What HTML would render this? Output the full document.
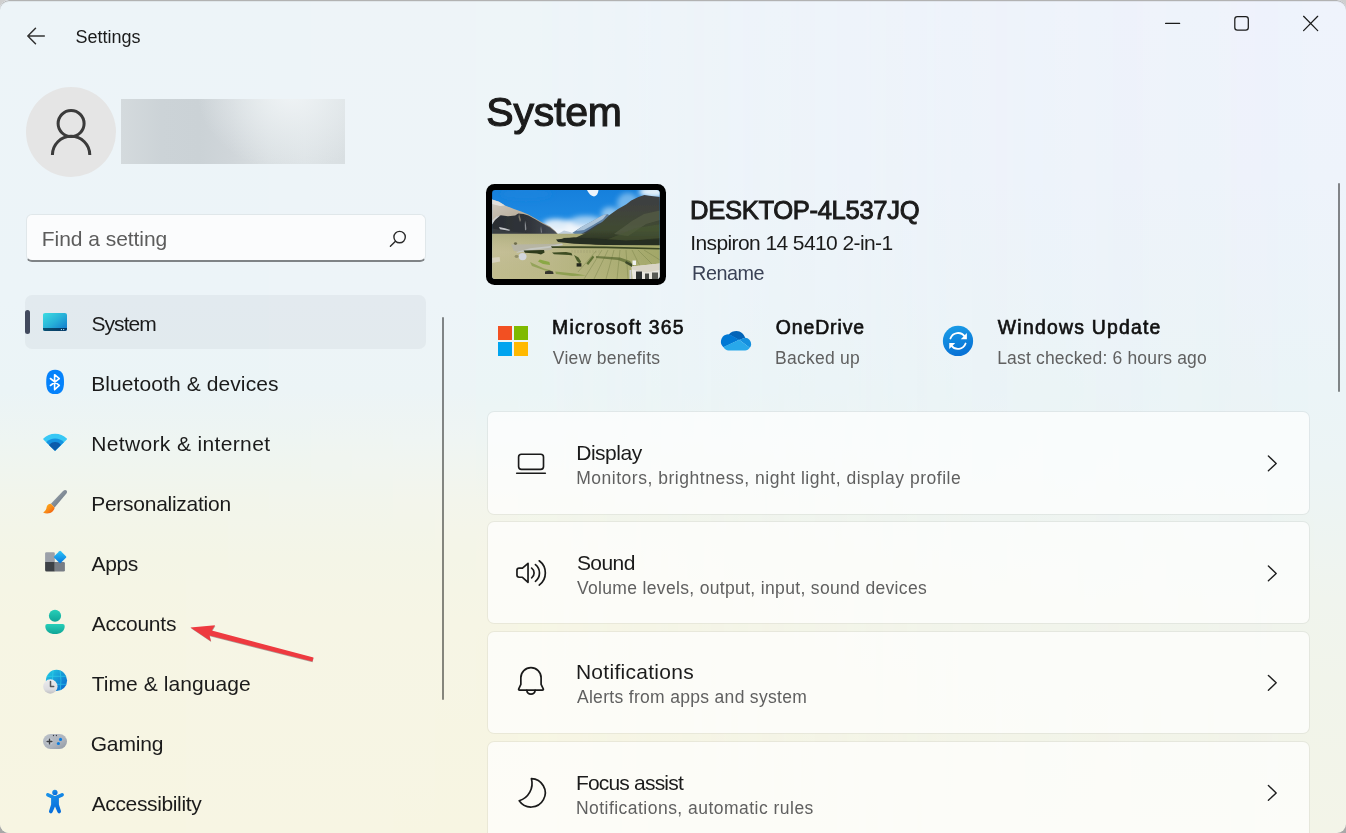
<!DOCTYPE html>
<html lang="en">
<head>
<meta charset="utf-8">
<title>Settings</title>
<style>
html,body{margin:0;padding:0;}
body{width:1346px;height:833px;overflow:hidden;background:linear-gradient(180deg,#cfcfcf 0%,#a8a8a8 100%);font-family:"Liberation Sans",sans-serif;position:relative;}
#win{position:absolute;left:0;top:0;width:1346px;height:833px;border-radius:9px;overflow:hidden;
 background:linear-gradient(180deg,#eff3fc 0%,#eef3fb 21.6%,#ebf4f7 46.8%,#ecf4f5 56%,#eef4f1 65%,#f0f4ee 72%,#f1f4eb 81.6%,#f3f4e8 100%);}
#win::before{content:"";position:absolute;left:0;top:0;width:1346px;height:833px;
 background:linear-gradient(180deg,#edf4f8 0%,#ecf4f8 36%,#ebf4f6 47%,#eef5f2 52.8%,#f2f5eb 60%,#f4f5e6 67%,#f6f5e4 74.4%,#f7f5e2 100%);
 -webkit-mask-image:linear-gradient(90deg,rgba(0,0,0,1) 0%,rgba(0,0,0,.95) 40%,rgba(0,0,0,.25) 72%,rgba(0,0,0,0) 100%);mask-image:linear-gradient(90deg,rgba(0,0,0,1) 0%,rgba(0,0,0,.95) 40%,rgba(0,0,0,.25) 72%,rgba(0,0,0,0) 100%);}
#win::after{content:"";position:absolute;left:0;top:0;width:1346px;height:833px;border-radius:9px;box-shadow:inset 0 1px 0 #b2b2b2, inset 0 2px 0 rgba(0,0,0,.05);pointer-events:none;}
.abs{position:absolute;}
#txt{position:absolute;left:0;top:0;width:1346px;height:833px;will-change:transform;}
.t{position:absolute;white-space:nowrap;margin:0;padding:0;}
.card{position:absolute;left:487px;width:823px;height:103.5px;border:1.4px solid rgba(0,0,0,.05);border-radius:7px;background:rgba(255,255,255,.7);background-clip:padding-box;box-sizing:border-box;}
svg{position:absolute;overflow:visible;}
</style>
</head>
<body>
<div id="win">
<!-- title bar -->
<svg style="left:0;top:0" width="1346" height="60" viewBox="0 0 1346 60" fill="none" stroke="#1b1b1b" stroke-width="1.5" stroke-linecap="round" stroke-linejoin="round">
  <path d="M35.5 28.3 L27.8 36 L35.5 43.7 M28 36 H44.3" stroke="#333"/>
  <path d="M1165.6 23.4 H1179.6" stroke-width="1.25"/>
  <rect x="1234.8" y="16.7" width="13.5" height="13.3" rx="2.6" stroke-width="1.25"/>
  <path d="M1303.6 16.3 L1317.7 30.6 M1317.7 16.3 L1303.6 30.6" stroke-width="1.25"/>
</svg>

<!-- avatar -->
<div class="abs" style="left:26px;top:87px;width:90px;height:90px;border-radius:50%;background:#e5e5e5;"></div>
<svg style="left:26px;top:87px" width="90" height="90" viewBox="26 87 90 90" fill="none" stroke="#3b3b3b" stroke-width="3">
  <circle cx="71.1" cy="123.6" r="13"/>
  <path d="M52.4 155 A18.7 18.7 0 0 1 89.8 155"/>
</svg>
<div class="abs" style="left:121px;top:99px;width:224px;height:65px;background:radial-gradient(ellipse 42% 120% at 76% -10%,rgba(240,244,246,.95) 0%,rgba(236,241,243,.6) 45%,rgba(225,231,234,0) 100%),linear-gradient(90deg,#d4dadd 0%,#ccd3d7 18%,#cbd2d6 35%,#d0d6da 50%,#d9dfe2 66%,#dde3e6 82%,#d9dfe2 100%);"></div>

<!-- search box -->
<div class="abs" style="left:25.5px;top:213.6px;width:400px;height:48.4px;box-sizing:border-box;border:1.3px solid #e0e7ea;border-bottom:2px solid #7f8386;border-radius:6px;background:#fbfcfd;"></div>
<svg style="left:388px;top:229px" width="20" height="20" viewBox="388 229 20 20" fill="none" stroke="#2a2a2a" stroke-width="1.4" stroke-linecap="round">
  <circle cx="399.6" cy="237.1" r="5.7"/>
  <path d="M395.5 241.2 L390.4 246.3"/>
</svg>

<!-- nav selection -->
<div class="abs" style="left:25px;top:295px;width:401px;height:54px;border-radius:7px;background:rgba(0,10,20,.038);"></div>
<div class="abs" style="left:25px;top:310px;width:4.5px;height:24px;border-radius:2.5px;background:#424a5e;"></div>

<!-- sidebar scrollbar -->
<div class="abs" style="left:441.6px;top:316.6px;width:2.8px;height:383.4px;border-radius:1.4px;background:rgba(0,0,0,.46);"></div>
<!-- right scrollbar -->
<div class="abs" style="left:1337.6px;top:182.6px;width:2.8px;height:209.4px;border-radius:1.4px;background:rgba(0,0,0,.46);"></div>

<!-- cards -->
<div class="card" style="top:411px"></div>
<div class="card" style="top:520.9px"></div>
<div class="card" style="top:630.8px"></div>
<div class="card" style="top:740.7px"></div>
<!-- nav icons -->
<svg style="left:0;top:290px" width="90" height="543" viewBox="0 290 90 543">
  <defs>
    <linearGradient id="gSys" x1="0" y1="0" x2="1" y2="1"><stop offset="0" stop-color="#3ddde2"/><stop offset=".5" stop-color="#27b1d8"/><stop offset="1" stop-color="#1174cb"/></linearGradient>
    <linearGradient id="gSysB" x1="0" y1="0" x2="1" y2="0"><stop offset="0" stop-color="#0b5172"/><stop offset="1" stop-color="#053763"/></linearGradient>
    <clipPath id="cSys"><rect x="42.9" y="312.9" width="24.1" height="18" rx="2.2"/></clipPath>
    <linearGradient id="gBrH" x1="0" y1="0" x2="1" y2="1"><stop offset="0" stop-color="#a3abb5"/><stop offset=".55" stop-color="#7e8994"/><stop offset="1" stop-color="#4e5b69"/></linearGradient>
    <linearGradient id="gBrB" x1="0" y1="0" x2="1" y2="1"><stop offset="0" stop-color="#ffb81c"/><stop offset=".55" stop-color="#f88a17"/><stop offset="1" stop-color="#ee4e0e"/></linearGradient>
    <linearGradient id="gDia" x1="0" y1="0" x2="1" y2="1"><stop offset="0" stop-color="#2cc8fa"/><stop offset="1" stop-color="#0874dc"/></linearGradient>
    <linearGradient id="gAcc" x1="0" y1="0" x2="0" y2="1"><stop offset="0" stop-color="#27cfb9"/><stop offset="1" stop-color="#0fa596"/></linearGradient>
    <linearGradient id="gGlobe" x1="0" y1="0" x2="1" y2="1"><stop offset="0" stop-color="#23cfe4"/><stop offset=".5" stop-color="#1697d6"/><stop offset="1" stop-color="#0662cf"/></linearGradient>
    <linearGradient id="gClock" x1="0" y1="0" x2="0" y2="1"><stop offset="0" stop-color="#ececee"/><stop offset=".7" stop-color="#dcdcdf"/><stop offset="1" stop-color="#bfbfc3"/></linearGradient>
    <clipPath id="cGlobe"><circle cx="56.5" cy="680.4" r="10.6"/></clipPath>
    <linearGradient id="gPad" x1="0" y1="0" x2="1" y2="1"><stop offset="0" stop-color="#bcc2ca"/><stop offset=".6" stop-color="#adb3bc"/><stop offset="1" stop-color="#8f97a2"/></linearGradient>
    <linearGradient id="gAx" x1="0" y1="0" x2="0.4" y2="1"><stop offset="0" stop-color="#1c96ea"/><stop offset="1" stop-color="#066cdb"/></linearGradient>
  </defs>
  <!-- System -->
  <g clip-path="url(#cSys)">
    <rect x="42.9" y="312.9" width="24.1" height="18" fill="url(#gSys)"/>
    <rect x="42.9" y="328" width="24.1" height="3" fill="url(#gSysB)"/>
    <rect x="60.9" y="329" width="1.1" height="1.1" fill="#a9d8ee"/>
    <rect x="63.1" y="329" width="1.1" height="1.1" fill="#a9d8ee"/>
  </g>
  <!-- Bluetooth -->
  <path d="M55.1 369.7 C62.3 369.7 64 374.9 64 381.9 C64 388.9 62.3 394.1 55.1 394.1 C47.9 394.1 46.2 388.9 46.2 381.9 C46.2 374.9 47.9 369.7 55.1 369.7 Z" fill="#0582fb"/>
  <path d="M50.4 378.5 L59.3 385.4 L54.6 389.6 V374.7 L59.3 378.7 L50.4 385.5" fill="none" stroke="#fff" stroke-width="1.6" stroke-linejoin="round" stroke-linecap="round"/>
  <!-- Network -->
  <g stroke-linejoin="round">
    <path d="M55.1 450 L43.9 439 A16 16 0 0 1 66.3 439 Z" fill="#38c8f5" stroke="#38c8f5" stroke-width="1.4"/>
    <path d="M55.1 450.7 L46.3 442.2 A12.2 12.2 0 0 1 63.9 442.2 Z" fill="#1592e0"/>
    <path d="M55.1 450.7 L49.6 445.3 A7.8 7.8 0 0 1 60.6 445.3 Z" fill="#0c5cab"/>
    <path d="M55.1 450 L49.9 445 A7.3 7.3 0 0 1 60.3 445" fill="#0c5cab" stroke="#0c5cab" stroke-width="1.4"/>
  </g>
  <!-- Personalization -->
  <path d="M50.9 503.7 L62.8 491.2 C64.4 489.7 66 489.9 66.7 490.7 C67.3 491.5 67 492.6 66.2 493.8 L54.6 507.6 Z" fill="url(#gBrH)"/>
  <path d="M50.9 503.8 C48.9 503.6 46.8 505.2 46.6 507.3 C46.4 509.9 44.6 511.6 43.1 512.5 C45.9 513.9 50.3 513.8 52.8 511.2 C54.1 509.9 54.7 508.6 54.5 507.5 Z" fill="url(#gBrB)"/>
  <!-- Apps -->
  <path d="M46.4 552.2 H53.5 Q54.8 552.2 54.8 553.5 V561.9 H45.1 V553.5 Q45.1 552.2 46.4 552.2 Z" fill="#9ba0a9"/>
  <path d="M45.1 561.9 H54.8 V571.6 H46.6 Q45.1 571.6 45.1 570.1 Z" fill="#3d4146"/>
  <path d="M54.8 561.9 H63.5 Q64.9 561.9 64.9 563.3 V570.2 Q64.9 571.6 63.5 571.6 H54.8 Z" fill="#787d85"/>
  <rect x="55.4" y="552.3" width="9.4" height="9.4" rx="1.1" fill="url(#gDia)" transform="rotate(45 60.1 557)"/>
  <!-- Accounts -->
  <circle cx="55" cy="615.75" r="6.1" fill="url(#gAcc)"/>
  <path d="M47.4 623.9 H62.6 Q64.7 623.9 64.7 626 C64.7 631.4 60.4 634 55 634 C49.6 634 45.3 631.4 45.3 626 Q45.3 623.9 47.4 623.9 Z" fill="url(#gAcc)"/>
  <!-- Time & language -->
  <circle cx="56.5" cy="680.4" r="10.6" fill="url(#gGlobe)"/>
  <g clip-path="url(#cGlobe)" fill="none" stroke="#35dbef" stroke-width="0.9" opacity=".6">
    <path d="M44 676.3 H70 M44 684.3 H70"/>
    <path d="M53.2 669 Q51.6 680 53.4 692"/>
    <path d="M60 669 Q61.8 680 60.2 692"/>
  </g>
  <circle cx="50.35" cy="686.5" r="7.2" fill="url(#gClock)"/>
  <path d="M50.5 681.6 V686.6 H53.7" fill="none" stroke="#55565a" stroke-width="1.5" stroke-linecap="round" stroke-linejoin="round"/>
  <!-- Gaming -->
  <rect x="43" y="733.9" width="24" height="15.2" rx="7.6" fill="url(#gPad)"/>
  <circle cx="49.5" cy="741.5" r="3.3" fill="#c9ced5" opacity=".8"/>
  <path d="M49.5 739.1 V743.9 M47.1 741.5 H51.9" stroke="#3a3d42" stroke-width="1.35" stroke-linecap="round"/>
  <circle cx="53.5" cy="735.5" r="0.65" fill="#3a3d42"/><circle cx="56.4" cy="735.5" r="0.65" fill="#3a3d42"/>
  <circle cx="60.5" cy="739.4" r="1.55" fill="#0a7ce0"/><circle cx="58.4" cy="743.5" r="1.55" fill="#0a7ce0"/>
  <!-- Accessibility -->
  <g fill="url(#gAx)" stroke="none">
    <circle cx="54.9" cy="792.4" r="2.65"/>
    <path d="M46.2 794.1 C46.7 793 47.8 792.9 48.6 793.2 L53.6 795.6 C54.6 796 55.3 796 56.3 795.6 L61.4 793.2 C62.3 792.9 63.3 793.1 63.8 794.1 C64.2 795.2 63.7 796.2 62.8 796.6 L58.9 798.3 V804.6 L60.9 810.8 C61.2 811.9 60.8 812.9 59.8 813.3 C58.8 813.6 57.8 813.2 57.4 812.1 L55 806.4 L52.6 812.1 C52.2 813.2 51.2 813.6 50.2 813.3 C49.2 812.9 48.8 811.9 49.1 810.8 L51.1 804.6 V798.3 L47.2 796.6 C46.3 796.2 45.8 795.2 46.2 794.1 Z"/>
  </g>
</svg>
<!-- Microsoft logo -->
<svg style="left:498px;top:326px" width="30" height="30" viewBox="0 0 30 30">
  <rect x="0" y="0" width="14" height="14" fill="#f25022"/>
  <rect x="16" y="0" width="14" height="14" fill="#7fba00"/>
  <rect x="0" y="16" width="14" height="14" fill="#00a4ef"/>
  <rect x="16" y="16" width="14" height="14" fill="#ffb900"/>
</svg>
<!-- OneDrive -->
<svg style="left:712px;top:320px" width="48" height="40" viewBox="0 0 1000 833">
  <path d="M345 305 C390 250 450 228 510 228 C600 228 665 290 692 372 L565 415 L395 322 Z" fill="#0364b8"/>
  <path d="M350 300 C260 290 185 370 185 460 C185 500 205 540 240 565 L568 412 L400 318 Z" fill="#0078d4"/>
  <path d="M690 370 C760 375 815 430 815 505 C815 530 805 560 785 580 L565 412 Z" fill="#1490df"/>
  <path d="M565 410 L788 578 C765 612 730 635 690 635 L345 635 C300 635 262 610 238 562 Z" fill="#28a8ea"/>
</svg>
<!-- Windows Update -->
<svg style="left:934px;top:320px" width="48" height="40" viewBox="0 0 1000 833">
  <defs><linearGradient id="gWU" x1="0" y1="0" x2="0.3" y2="1"><stop offset="0" stop-color="#1b9fe8"/><stop offset="1" stop-color="#0873d6"/></linearGradient></defs>
  <circle cx="500" cy="437" r="315" fill="url(#gWU)"/>
  <g fill="none" stroke="#fff" stroke-width="38" stroke-linecap="round">
    <path d="M342 385 A168 168 0 0 1 640 345"/>
    <path d="M658 490 A168 168 0 0 1 362 530"/>
  </g>
  <path d="M685 272 V402 H558 Z" fill="#fff"/>
  <path d="M318 602 V478 H442 Z" fill="#fff"/>
</svg>
<!-- card icons -->
<svg style="left:506px;top:440px" width="50" height="393" viewBox="506 440 50 393" fill="none" stroke="#1a1a1a" stroke-width="1.65" stroke-linecap="round" stroke-linejoin="round">
  <!-- display -->
  <rect x="518.6" y="454.2" width="24.9" height="15.2" rx="2.8"/>
  <path d="M516.7 473.2 H545.3"/>
  <!-- sound -->
  <g transform="translate(506 550) scale(0.054)">
    <g stroke-width="31.5">
      <path d="M245 337 H305 L408 247 V598 L305 505 H245 Q203 505 203 465 V377 Q203 337 245 337 Z"/>
      <path d="M475 335 A112 112 0 0 1 475 515"/>
      <path d="M545 270 A198 198 0 0 1 545 580"/>
      <path d="M615 200 A280 280 0 0 1 615 650"/>
    </g>
  </g>
  <!-- bell -->
  <g transform="translate(506 658) scale(0.054)">
    <g stroke-width="31.5">
      <path d="M275 490 V365 A187.5 187.5 0 0 1 650 365 V490 L690 570 Q700 595 672 595 H253 Q226 595 236 570 Z"/>
      <path d="M385 600 A78 78 0 0 0 540 600"/>
    </g>
  </g>
  <!-- moon -->
  <g transform="translate(506 770) scale(0.054)">
    <path stroke-width="31.5" d="M470 160 A263 263 0 1 1 245 570 A335 335 0 0 0 470 160 Z"/>
  </g>
  <!-- chevrons drawn separately -->
</svg>
<svg style="left:1260px;top:440px" width="30" height="393" viewBox="1260 440 30 393" fill="none" stroke="#1f1f1f" stroke-width="1.4" stroke-linecap="round" stroke-linejoin="round">
  <path d="M1268.4 456 L1276.2 463.4 L1268.4 470.8"/>
  <path d="M1268.4 566 L1276.2 573.4 L1268.4 580.8"/>
  <path d="M1268.4 675.4 L1276.2 682.8 L1268.4 690.2"/>
  <path d="M1268.4 785.5 L1276.2 792.9 L1268.4 800.3"/>
</svg>
<!-- red arrow -->
<svg style="left:180px;top:610px" width="150" height="65" viewBox="180 610 150 65">
  <path d="M190.9 628.2 L215.4 626 L212.1 631.4 L313.6 658.2 L312.5 662.3 L209.8 636.2 L211.2 641.9 Z" fill="#6f5a5a" opacity=".55"/>
  <path d="M190.4 627.6 L215.1 625.3 L211.8 630.6 L313.5 657.4 L312.4 661.5 L209.5 635.4 L210.9 641.2 Z" fill="#ee3a40"/>
</svg>
<!-- device thumbnail -->
<svg style="left:486px;top:184px" width="180" height="101" viewBox="0 0 180 101">
  <defs>
    <linearGradient id="tSky" x1="0" y1="0" x2="0" y2="1"><stop offset="0" stop-color="#1680dc"/><stop offset=".3" stop-color="#1d89e2"/><stop offset=".5" stop-color="#3c9ce8"/><stop offset=".62" stop-color="#7dbdf0"/><stop offset="1" stop-color="#b4d8f4"/></linearGradient>
    <linearGradient id="tGround" x1="0" y1="0" x2="1" y2="0"><stop offset="0" stop-color="#c5bf97"/><stop offset=".35" stop-color="#bdb98c"/><stop offset=".6" stop-color="#b2b27c"/><stop offset="1" stop-color="#a2a768"/></linearGradient>
    <linearGradient id="tGroundV" x1="0" y1="0" x2="0" y2="1"><stop offset="0" stop-color="#8f9560" stop-opacity=".35"/><stop offset=".4" stop-color="#a8aa70" stop-opacity="0"/><stop offset="1" stop-color="#b9b87c" stop-opacity=".35"/></linearGradient>
    <linearGradient id="tRM" x1="0" y1="0" x2="0" y2="1"><stop offset="0" stop-color="#3c3e44"/><stop offset=".35" stop-color="#40443b"/><stop offset=".7" stop-color="#3f4a31"/><stop offset="1" stop-color="#262c1f"/></linearGradient>
    <linearGradient id="tLM" x1="0" y1="0" x2="1" y2="1"><stop offset="0" stop-color="#cfcac0"/><stop offset=".5" stop-color="#b7ab98"/><stop offset="1" stop-color="#9a907f"/></linearGradient>
    <linearGradient id="tFace" x1="0" y1="0" x2="1" y2="0"><stop offset="0" stop-color="#2a2d32"/><stop offset=".55" stop-color="#30343a"/><stop offset="1" stop-color="#4a4f57"/></linearGradient>
    <clipPath id="tClip"><rect x="6.1" y="6.1" width="167.6" height="88.8" rx="3"/></clipPath>
    <filter id="tBlur" x="-5%" y="-5%" width="110%" height="110%"><feGaussianBlur stdDeviation="0.6"/></filter>
    <filter id="tBlur2" x="-30%" y="-30%" width="160%" height="160%"><feGaussianBlur stdDeviation="2.4"/></filter>
  </defs>
  <rect x="0" y="0" width="180" height="101" rx="8.5" fill="#000"/>
  <g clip-path="url(#tClip)">
    <rect x="6" y="6" width="168" height="89" fill="url(#tSky)"/>
    <g filter="url(#tBlur2)">
      <ellipse cx="82" cy="45" rx="26" ry="9" fill="#f1f6fb"/>
      <ellipse cx="70" cy="40" rx="13" ry="5" fill="#dcebf8"/>
      <ellipse cx="100" cy="37" rx="16" ry="5" fill="#a5d0f3"/>
      <ellipse cx="168" cy="8" rx="15" ry="6" fill="#e2f0fb"/>
      <ellipse cx="142" cy="20" rx="11" ry="11" fill="#86c1ef" opacity=".8"/>
      <ellipse cx="124" cy="30" rx="9" ry="7" fill="#a9d3f3" opacity=".8"/>
      <ellipse cx="40" cy="10" rx="26" ry="6" fill="#1a84de" opacity=".7"/>
    </g>
    <g filter="url(#tBlur)">
      <path d="M101 6 H112.5 Q112 11.5 108 12.6 Q103.5 11.5 101 6 Z" fill="#edf4fb"/>
      <!-- far ridge -->
      <path d="M76 52 L85.4 49.6 L95.3 43 L106.4 37 L116.2 31.6 L121 30 L130 34 L120 52 L96 58 Z" fill="#5f80a2"/>
      <path d="M90 47 L95.3 43 L106.4 37 L116.2 31.6 L121 30 L117 35 L107 41 L98 46 Z" fill="#b4cbe0" opacity=".9"/>
      <path d="M72 50 L78 46.5 L84 48 L90 50.5 L84 53 Z" fill="#c0cedb"/>
      <path d="M88 53.5 L100 47.5 L112 40 L119 37 L122 52 L100 58 Z" fill="#39424b"/>
      <!-- left mountain -->
      <path d="M6 15.4 L13 17.8 L19 21.4 L28 25 L35.2 27.4 L42.4 30.4 L49.6 34.6 L56.8 38.8 L64 42.4 L69 46.8 L73 51.2 L6 50 Z" fill="url(#tLM)"/>
      <path d="M6 15.4 L13 17.8 L19 21.4 L14 22 L6 20 Z" fill="#e2e0dc"/>
      <path d="M6 40 L10 33.4 L14.8 31.3 L22 32.2 L29.2 31.6 L32.2 29.4 L37.6 30 L42.4 31.4 L49.6 35.6 L56.8 39.8 L64 43.4 L69 47.6 L72.8 51.4 L50 51 L6 48.5 Z" fill="url(#tFace)"/>
      <path d="M6 36.5 L10.5 32.6 L14 31.8 L9 36 L6 40.5 Z" fill="#cfd0ce"/>
      <path d="M13 43 L19 44.2 L24.4 46 L23 46.8 L14 45.2 Z" fill="#c2c5c8"/>
      <path d="M39 36.5 L40 41 L40.4 45.6 L39 46.4 L38.8 41 Z" fill="#9a9ea2" opacity=".85"/>
      <path d="M33 29.5 L35 36 L34 38 L32.5 33 Z" fill="#8d8778" opacity=".8"/>
      <path d="M55 42 L56 48 L55 49.4 L54.5 45 Z" fill="#8d9196" opacity=".8"/>
      <path d="M6 44.5 L20 47 L40 49 L60 50.4 L73 51.6 L6 51 Z" fill="#393c40"/>
      <!-- ground -->
      <rect x="6" y="49.8" width="168" height="46" fill="url(#tGround)"/>
      <rect x="6" y="49.8" width="168" height="46" fill="url(#tGroundV)"/>
      <path d="M25 60.5 L64 60 L76 59.5 L64 66 L40 68.5 L28 67 Z" fill="#b5b4aa" opacity=".8"/>
      <!-- right mountain -->
      <path d="M76 54 L90 53.5 L102 48 L114 40 L124.2 30.4 L132 25 L140.4 20.2 L145.2 16.6 L152.4 13 L158.4 10.9 L163.2 11.8 L174 13 V61 L110 60.5 L84 58 Z" fill="url(#tRM)"/>
      <path d="M128 50 L146 37 L158 30 L174 26.5 V36 L160 40 L142 52 Z" fill="#5c634a" opacity=".6"/>
      <path d="M120 56 L150 44 L174 40 V54 L140 57 Z" fill="#4b5935" opacity=".55"/>
      <path d="M70 55.5 L88 53.4 L110 54.5 L140 56.5 L174 55.5 V61.2 L120 61 L88 59.8 L72 58 Z" fill="#272d20"/>
      <!-- river / road -->
      <path d="M76 59.6 L62 62.2 L44 64.2 L32 67.5 L30 69 L46 66 L62 64 L77 61 Z" fill="#c6c8c2"/>
      <!-- dark green bands -->
      <path d="M65 62.2 H94 L120 62.5 L174 64 V65.6 L120 64.2 L66 64 Z" fill="#3a4724"/>
      <path d="M37.6 66.6 L58 66 L58.6 68.6 L55 70.5 L51 69.6 L39 68.8 Z" fill="#2e3a1d"/>
      <path d="M66 68.6 L80 68 L85.4 69 L86.5 71.6 L83 71 L68 70.2 Z" fill="#3e4d24"/>
      <path d="M88 71 L92.5 73.5 L95 77.5 L94 80 L91 77 Z" fill="#4b5c2c"/>
      <path d="M90.6 79.2 h4.8 v3.4 h-4.8 z" fill="#24281b"/>
      <path d="M100.4 79.4 L106.8 71.6 L108.2 73.2 L102.2 81 Z" fill="#5f7136"/>
      <path d="M53.8 75.4 L63.4 78 L64 81 L57 80 L52 77.5 Z" fill="#8aa844"/>
      <path d="M44 78 L58 84.5 L66 86.5 L62 87.6 L46 82 Z" fill="#8b9e4d" opacity=".8"/>
      <path d="M69.2 87.6 L89 89.6 L100 91.4 L86 92 L70 90 Z" fill="#879c49" opacity=".85"/>
      <ellipse cx="36.6" cy="72.6" rx="3.9" ry="3.6" fill="#d2d6dc"/>
      <path d="M6 73.8 L13.6 73 L14.2 77.6 L6 79 Z" fill="#d7d1bd"/>
      <path d="M59 87.6 l4 -1.2 l4 1 l.6 2.6 h-8.6 z" fill="#36362d"/>
      <ellipse cx="29.5" cy="59.6" rx="1.6" ry="1.3" fill="#5b5a3c" opacity=".8"/>
      <ellipse cx="30.6" cy="72.5" rx="2" ry="1.4" fill="#7f7e58" opacity=".7"/>
      <!-- field furrows -->
      <g stroke="#6b7740" stroke-width=".6" opacity=".6" fill="none">
        <path d="M122 66 L108 95"/><path d="M128 66 L120 95"/><path d="M134 66 L131 95"/><path d="M140 66 L142 95"/>
        <path d="M146 66 L154 82"/><path d="M152 66 L166 80"/><path d="M158 66 L174 76"/><path d="M116 66 L98 95"/>
        <path d="M110 67 L92 88"/>
      </g>
      <g stroke="#8b8b62" stroke-width=".5" opacity=".6"><path d="M86 66 V69 M89 66 V69 M92 66 V69 M95 66 V69 M98 66 V69 M101 66 V69 M104 66 V69 M107 66 V69 M110 66 V69 M113 66 V69"/></g>
      <path d="M110 72 L134 73.5 L144 77 L148 82 L143 80 L132 76 L110 74 Z" fill="#56672f" opacity=".7"/>
      <!-- building -->
      <path d="M145.5 82.5 L174 79.5 V95 H146.5 Z" fill="#e8e6df"/>
      <path d="M145.8 82.6 L174 79.6 V86 L160 88.5 L146.2 85.5 Z" fill="#d9d4c6"/>
      <path d="M150 87.5 H156 V95 H150 Z" fill="#2e3030"/>
      <path d="M159 89.5 H163 V95 H159 Z" fill="#454743"/>
      <path d="M166 88.5 H172 V95 H166 Z" fill="#595a55"/>
      <path d="M146.5 76.5 h3.5 v4.5 h-3.5 z" fill="#eef0f0"/>
      <path d="M143.5 86 h2 v9 h-2 z" fill="#c9ccd0"/>
      <path d="M140 77 L146 80 L146 83 L139 79 Z" fill="#3d4a2a"/>
    </g>
  </g>
</svg>

<!-- text -->
<div id="txt">
<div class="t" style="left:75.50px;top:25.96px;font-size:18px;line-height:22px;font-weight:400;color:#1b1b1b;letter-spacing:-0.020px;">Settings</div>
<div class="t" style="left:41.80px;top:226.22px;font-size:21px;line-height:25px;font-weight:400;color:#5c5c5c;letter-spacing:-0.046px;">Find a setting</div>
<div class="t" style="left:91.40px;top:311.22px;font-size:21px;line-height:25px;font-weight:400;color:#1b1b1b;letter-spacing:-0.924px;">System</div>
<div class="t" style="left:91.20px;top:371.22px;font-size:21px;line-height:25px;font-weight:400;color:#1b1b1b;letter-spacing:0.094px;">Bluetooth &amp; devices</div>
<div class="t" style="left:91.20px;top:431.22px;font-size:21px;line-height:25px;font-weight:400;color:#1b1b1b;letter-spacing:0.359px;">Network &amp; internet</div>
<div class="t" style="left:91.20px;top:491.22px;font-size:21px;line-height:25px;font-weight:400;color:#1b1b1b;letter-spacing:-0.265px;">Personalization</div>
<div class="t" style="left:91.60px;top:551.22px;font-size:21px;line-height:25px;font-weight:400;color:#1b1b1b;letter-spacing:-0.388px;">Apps</div>
<div class="t" style="left:91.70px;top:611.22px;font-size:21px;line-height:25px;font-weight:400;color:#1b1b1b;letter-spacing:-0.240px;">Accounts</div>
<div class="t" style="left:91.70px;top:671.22px;font-size:21px;line-height:25px;font-weight:400;color:#1b1b1b;letter-spacing:0.071px;">Time &amp; language</div>
<div class="t" style="left:90.70px;top:731.22px;font-size:21px;line-height:25px;font-weight:400;color:#1b1b1b;letter-spacing:-0.150px;">Gaming</div>
<div class="t" style="left:91.70px;top:791.22px;font-size:21px;line-height:25px;font-weight:400;color:#1b1b1b;letter-spacing:-0.363px;">Accessibility</div>
<div class="t" style="left:486.27px;top:88.09px;font-size:41px;line-height:49px;font-weight:400;color:#1b1b1b;letter-spacing:-0.198px;-webkit-text-stroke:1.15px #1b1b1b;">System</div>
<div class="t" style="left:690.08px;top:194.83px;font-size:25.6px;line-height:31px;font-weight:400;color:#1b1b1b;letter-spacing:-0.342px;-webkit-text-stroke:0.95px #1b1b1b;">DESKTOP-4L537JQ</div>
<div class="t" style="left:690.20px;top:230.12px;font-size:21px;line-height:25px;font-weight:400;color:#1b1b1b;letter-spacing:-0.591px;">Inspiron 14 5410 2-in-1</div>
<div class="t" style="left:692.10px;top:260.94px;font-size:19.8px;line-height:24px;font-weight:400;color:#3a4256;letter-spacing:-0.493px;">Rename</div>
<div class="t" style="left:552.12px;top:316.08px;font-size:19.4px;line-height:23px;font-weight:400;color:#111;letter-spacing:1.262px;-webkit-text-stroke:0.65px #111;">Microsoft 365</div>
<div class="t" style="left:552.80px;top:348.04px;font-size:17.5px;line-height:21px;font-weight:400;color:#606060;letter-spacing:0.290px;">View benefits</div>
<div class="t" style="left:775.73px;top:316.08px;font-size:19.4px;line-height:23px;font-weight:400;color:#111;letter-spacing:0.919px;-webkit-text-stroke:0.65px #111;">OneDrive</div>
<div class="t" style="left:775.00px;top:348.04px;font-size:17.5px;line-height:21px;font-weight:400;color:#606060;letter-spacing:0.267px;">Backed up</div>
<div class="t" style="left:997.83px;top:316.08px;font-size:19.4px;line-height:23px;font-weight:400;color:#111;letter-spacing:1.228px;-webkit-text-stroke:0.65px #111;">Windows Update</div>
<div class="t" style="left:997.20px;top:348.04px;font-size:17.5px;line-height:21px;font-weight:400;color:#606060;letter-spacing:0.177px;">Last checked: 6 hours ago</div>
<div class="t" style="left:576.20px;top:440.02px;font-size:21px;line-height:25px;font-weight:400;color:#1b1b1b;letter-spacing:-0.476px;">Display</div>
<div class="t" style="left:576.20px;top:467.84px;font-size:17.5px;line-height:21px;font-weight:400;color:#606060;letter-spacing:0.523px;">Monitors, brightness, night light, display profile</div>
<div class="t" style="left:576.90px;top:550.32px;font-size:21px;line-height:25px;font-weight:400;color:#1b1b1b;letter-spacing:-0.561px;">Sound</div>
<div class="t" style="left:576.90px;top:578.04px;font-size:17.5px;line-height:21px;font-weight:400;color:#606060;letter-spacing:0.339px;">Volume levels, output, input, sound devices</div>
<div class="t" style="left:575.90px;top:659.32px;font-size:21px;line-height:25px;font-weight:400;color:#1b1b1b;letter-spacing:0.285px;">Notifications</div>
<div class="t" style="left:576.90px;top:686.84px;font-size:17.5px;line-height:21px;font-weight:400;color:#606060;letter-spacing:0.316px;">Alerts from apps and system</div>
<div class="t" style="left:575.90px;top:770.32px;font-size:21px;line-height:25px;font-weight:400;color:#1b1b1b;letter-spacing:-0.806px;">Focus assist</div>
<div class="t" style="left:575.90px;top:798.04px;font-size:17.5px;line-height:21px;font-weight:400;color:#606060;letter-spacing:0.474px;">Notifications, automatic rules</div>
</div>
</div>
</body>
</html>
